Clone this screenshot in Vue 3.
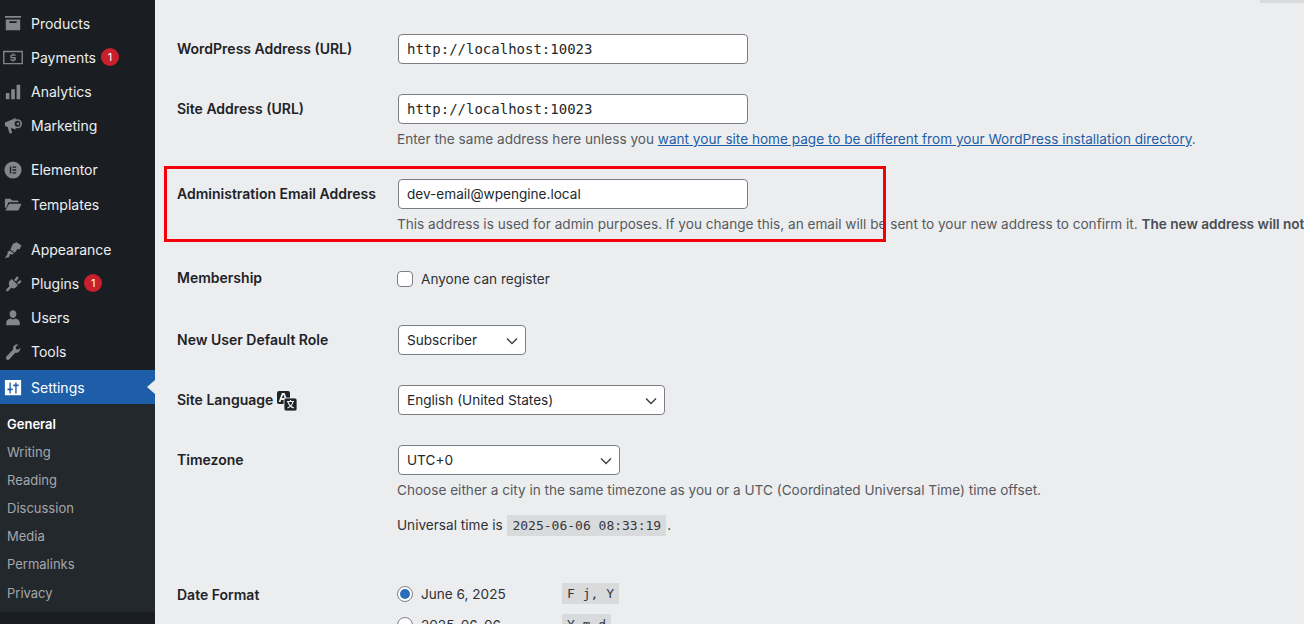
<script setup>
const menu = [
  { label: 'Products', icon: 'products' },
  { label: 'Payments', icon: 'payments', badge: 1 },
  { label: 'Analytics', icon: 'analytics' },
  { label: 'Marketing', icon: 'marketing', sep: true },
  { label: 'Elementor', icon: 'elementor', tall: true },
  { label: 'Templates', icon: 'templates', sep2: true },
  { label: 'Appearance', icon: 'appearance' },
  { label: 'Plugins', icon: 'plugins', badge: 1 },
  { label: 'Users', icon: 'users' },
  { label: 'Tools', icon: 'tools', gap: true },
  { label: 'Settings', icon: 'settings', active: true }
]
const sub = ['General', 'Writing', 'Reading', 'Discussion', 'Media', 'Permalinks', 'Privacy']
</script>

<template>
  <div class="page">
    <aside class="side">
      <div
        v-for="m in menu"
        :key="m.label"
        class="item"
        :class="{ sep: m.sep, sep2: m.sep2, tall: m.tall, gap: m.gap, active: m.active }"
      >
        <svg class="ic" viewBox="0 0 20 20" fill="currentColor">
          <template v-if="m.icon === 'products'">
            <path d="M1 1h18v2H1zM2 5h16v12H2zM6 7v2h8V7z" fill-rule="evenodd" />
          </template>
          <template v-else-if="m.icon === 'payments'">
            <path fill-rule="evenodd" d="M-1 2h22v15H-1zM.5 3.500v12h19v-12z" />
            <path d="M9.300 4.800h1.400v1.200H13v1.500H8.600v1.300H13v4H10.700v1.400H9.300v-1.400H7v-1.500h4.400v-1H7v-4h2.300z" />
          </template>
          <template v-else-if="m.icon === 'analytics'">
            <path d="M2 11h4v7H2zM8 7h4v11H8zM14 2h4v16h-4z" />
          </template>
          <template v-else-if="m.icon === 'marketing'">
            <path d="M1 7c0-.8.5-1.500 1.500-1.500L13 1v13L2.500 10.500C1.500 10.500 1 9.800 1 9z" />
            <path d="M4 10.500l3.500 1 1.500 6.500H6z" />
            <circle cx="15" cy="7.500" r="5" />
            <circle cx="15" cy="7.500" r="3.200" fill="#1a1e23" />
            <circle cx="15.500" cy="7.500" r="1.400" />
          </template>
          <template v-else-if="m.icon === 'elementor'">
            <path fill-rule="evenodd" d="M10 0.500a9.500 9.500 0 1 1 0 19 9.500 9.500 0 0 1 0-19zM6.500 6v8H8V6zM9.500 6v1.500h4V6zM9.500 9.200v1.600h4V9.200zM9.500 12.500V14h4v-1.500z" />
          </template>
          <template v-else-if="m.icon === 'templates'">
            <path d="M1 4c0-.6.4-1 1-1h5l2 2h6c.6 0 1 .4 1 1v1H5L2.500 13H1zM5.800 8.500H19.500L16 16H1.500z" />
          </template>
          <template v-else-if="m.icon === 'appearance'">
            <path d="M10 3l4-1.500L19.500 5 17 9.500l-2-.5-3 4-5-3.500z" />
            <path d="M6.500 10.500L11 13.500 9.500 15 6.800 14.500 5.500 18l-4.500.8L4 14.500V12z" />
          </template>
          <template v-else-if="m.icon === 'plugins'">
            <path d="M8.500 4.500L15.500 11l-2.500 3c-2 1.500-3.500 1.200-5 .3L4.500 18H2.500v-2l3.700-3.800C5 10.500 5 8.500 6.500 6.500z" />
            <path d="M11 5.500l3.500-4 2 1.500L13.500 7.200zM14.500 8.500l3.500-3 1.500 2-3.500 3z" />
          </template>
          <template v-else-if="m.icon === 'users'">
            <path d="M10 1.500c2.300 0 3.800 1.800 3.800 4s-1.500 4.500-3.800 4.500-3.800-2.300-3.800-4.500 1.500-4 3.800-4zM2.500 15c0-2.500 2.300-4 5-4.500.8.600 1.600 1 2.500 1s1.700-.4 2.500-1c2.700.5 5 2 5 4.500v3h-15z" />
          </template>
          <template v-else-if="m.icon === 'tools'">
            <path d="M17 6.500c.6-.6 1-1.500 1-1.500s.4 2-.5 3.700c-1 1.800-3 2.600-5 2.100L6 18c-1 1-2.500 1-3.300 0s-.7-2.300.2-3.300l7.200-7.500c-.5-2 .3-4 2.200-5C14 1.300 16 2 16 2l-3 2.500.5 2.500 2.200.6z" />
          </template>
          <template v-else>
            <path fill-rule="evenodd" d="M1 1h18v17H1zM6 4v6.500H3.800v2H6V16h1.500v-3.500h2.200v-2H7.500V4zM12.500 4v2H10.300v2h2.200v8H14V8h2.200V6H14V4z" />
          </template>
        </svg>
        <span>{{ m.label }}</span>
        <span v-if="m.badge" class="badge">{{ m.badge }}</span>
        <i v-if="m.active" class="arrow"></i>
      </div>
      <div class="submenu">
        <div v-for="(s, i) in sub" :key="s" class="subitem" :class="{ current: i === 0 }">{{ s }}</div>
      </div>
    </aside>

    <main class="main">
      <div class="topcode"></div>
      <div class="row r1">
        <div class="lab">WordPress Address (URL)</div>
        <div class="field"><div class="input mono">http://localhost:10023</div></div>
      </div>
      <div class="row r2">
        <div class="lab">Site Address (URL)</div>
        <div class="field">
          <div class="input mono">http://localhost:10023</div>
          <p class="desc">Enter the same address here unless you <a>want your site home page to be different from your WordPress installation directory</a>.</p>
        </div>
      </div>
      <div class="row r3">
        <div class="lab">Administration Email Address</div>
        <div class="field">
          <div class="input">dev-email@wpengine.local</div>
          <p class="desc">This address is used for admin purposes. If you change this, an email will be sent to your new address to confirm it. <b>The new address will not become active until confirmed.</b></p>
        </div>
        <div class="highlight"></div>
      </div>
      <div class="row r4">
        <div class="lab">Membership</div>
        <div class="field check"><span class="box"></span><span>Anyone can register</span></div>
      </div>
      <div class="row r5">
        <div class="lab">New User Default Role</div>
        <div class="field">
          <div class="select w-role">Subscriber
            <svg class="chev" viewBox="0 0 12 8"><path d="M1 1.500l5 5 5-5" /></svg>
          </div>
        </div>
      </div>
      <div class="row r5">
        <div class="lab">Site Language
          <svg class="lang" viewBox="0 0 20 20">
            <rect x="0" y="0" width="13" height="13" rx="2" fill="#1d2327" />
            <path d="M2.500 11l3-8h1.500l3 8M4 8h4.500" fill="none" stroke="#ecedef" stroke-width="1.800" />
            <rect x="7" y="7" width="13" height="13" rx="2" fill="#1d2327" stroke="#ecedef" stroke-width=".8" />
            <path d="M10 10.500h7M13.500 9v1.500M16 10.500c-.6 3-2.800 5.500-5.500 6.500M11 11c.8 2.500 3 5 6 6" fill="none" stroke="#ecedef" stroke-width="1.200" />
          </svg>
        </div>
        <div class="field">
          <div class="select w-lang">English (United States)
            <svg class="chev" viewBox="0 0 12 8"><path d="M1 1.500l5 5 5-5" /></svg>
          </div>
        </div>
      </div>
      <div class="row r6">
        <div class="lab">Timezone</div>
        <div class="field">
          <div class="select w-tz">UTC+0
            <svg class="chev" viewBox="0 0 12 8"><path d="M1 1.500l5 5 5-5" /></svg>
          </div>
          <p class="desc">Choose either a city in the same timezone as you or a UTC (Coordinated Universal Time) time offset.</p>
          <p class="utc">Universal time is <code>2025-06-06 08:33:19</code>.</p>
        </div>
      </div>
      <div class="row r7">
        <div class="lab">Date Format</div>
        <div class="field dates">
          <div class="radio-row"><span class="radio on"></span><span class="rlabel">June 6, 2025</span><code>F j, Y</code></div>
          <div class="radio-row"><span class="radio"></span><span class="rlabel">2025-06-06</span><code>Y-m-d</code></div>
        </div>
      </div>
    </main>
  </div>
</template>

<style>
html, body { margin: 0; overflow: hidden; }
</style>

<style scoped>
.page {
  display: flex;
  width: 1304px;
  height: 624px;
  overflow: hidden;
  background: #ecedef;
  font-family: Inter, "Liberation Sans", sans-serif;
  font-size: 14px;
  color: #2d3136;
}
.side {
  flex: 0 0 155px;
  background: #1a1e23;
  padding-top: 6px;
  box-sizing: border-box;
  color: #eceff1;
}
.item {
  position: relative;
  display: flex;
  align-items: center;
  height: 34px;
  padding-left: 31px;
}
.item.tall { height: 35px; }
.item.sep { margin-bottom: 10px; }
.item.sep2 { margin-bottom: 11px; }
.item.gap { margin-bottom: 2px; }
.ic {
  position: absolute;
  left: 4px;
  top: 9px;
  width: 18px;
  height: 18px;
  color: #83878c;
  overflow: visible;
}
.active { background: #1e5ea8; color: #fff; }
.active .ic { color: #fff; }
.arrow {
  position: absolute;
  right: 0;
  top: 10px;
  width: 0;
  height: 0;
  border: 7px solid transparent;
  border-right: 8px solid #ecedef;
  border-left-width: 0;
}
.badge {
  width: 18px;
  height: 18px;
  margin-left: 5px;
  border-radius: 50%;
  background: #c9202c;
  color: #fff;
  font-size: 11px;
  line-height: 18px;
  text-align: center;
}
.submenu {
  background: #23282d;
  padding: 6px 0 5px;
  height: 208px;
  box-sizing: border-box;
}
.subitem {
  height: 28.100px;
  line-height: 28px;
  padding-left: 7px;
  font-size: 13px;
  color: #a3a7ac;
}
.subitem.current { color: #fff; font-weight: 600; }

.main {
  flex: 1;
  min-width: 0;
  padding: 34px 0 0 22px;
  position: relative;
  font-size: 13.600px;
}
.topcode {
  position: absolute;
  right: 0;
  top: 0;
  width: 44px;
  height: 3px;
  background: #d9dadc;
}
.row { display: flex; position: relative; white-space: nowrap; }
.lab {
  flex: 0 0 221px;
  font-size: 14px;
  font-weight: 600;
  color: #1d2327;
  line-height: 30px;
}
.field { flex: 1; min-width: 0; }
.input, .select {
  box-sizing: border-box;
  height: 30px;
  line-height: 28px;
  border: 1px solid #7b7f85;
  border-radius: 4px;
  background: #fff;
  padding-left: 8px;
  color: #23282d;
  position: relative;
}
.input { width: 350px; }
.mono { font-family: "DejaVu Sans Mono", monospace; font-size: 14px; }
.r1 { height: 60px; }
.r2 { height: 85px; }
.r3 { height: 84px; }
.r4 { height: 62px; line-height: 30px; }
.r5 { height: 60px; }
.r6 { height: 135px; }
.desc {
  margin: 5px 0 0 -1px;
  line-height: 21px;
  color: #565a60;
}
.desc a { color: #1e5ea8; text-decoration: underline; }
.desc b { font-weight: 600; color: #4a4e54; }
.highlight {
  position: absolute;
  left: -13px;
  top: -13px;
  width: 722px;
  height: 76px;
  box-sizing: border-box;
  border: 3px solid #f40009;
  pointer-events: none;
}
.check { display: flex; align-items: center; gap: 8px; height: 30px; margin-left: -1px; padding-top: 1px; }
.box {
  width: 14px;
  height: 14px;
  border: 1px solid #7b7f85;
  border-radius: 4px;
  background: #fff;
}
.w-role { width: 128px; }
.w-lang { width: 267px; }
.w-tz { width: 222px; }
.chev {
  position: absolute;
  right: 7px;
  top: 11px;
  width: 12px;
  height: 8px;
  fill: none;
  stroke: #3a3f45;
  stroke-width: 1.400;
}
.lang {
  width: 20px;
  height: 20px;
  vertical-align: -6px;
}
.utc { margin: 14px 0 0 -1px; line-height: 21px; }
.utc code { margin-left: 1px; margin-right: 1px; }
code {
  display: inline-block;
  background: #d9dadc;
  font-family: "DejaVu Sans Mono", monospace;
  font-size: 13px;
  line-height: 21px;
  padding: 0 5px;
  color: #33373c;
}
.dates { padding-top: 3px; }
.radio-row { display: flex; align-items: center; height: 21px; margin-left: -1px; margin-bottom: 10px; }
.radio {
  box-sizing: border-box;
  width: 16px;
  height: 16px;
  border: 1px solid #7b7f85;
  border-radius: 50%;
  background: #fff;
  position: relative;
  flex: none;
}
.radio.on::after {
  content: "";
  position: absolute;
  left: 2px;
  top: 2px;
  width: 10px;
  height: 10px;
  border-radius: 50%;
  background: #2a6ebb;
}
.rlabel { width: 141px; margin-left: 8px; flex: none; }
</style>
